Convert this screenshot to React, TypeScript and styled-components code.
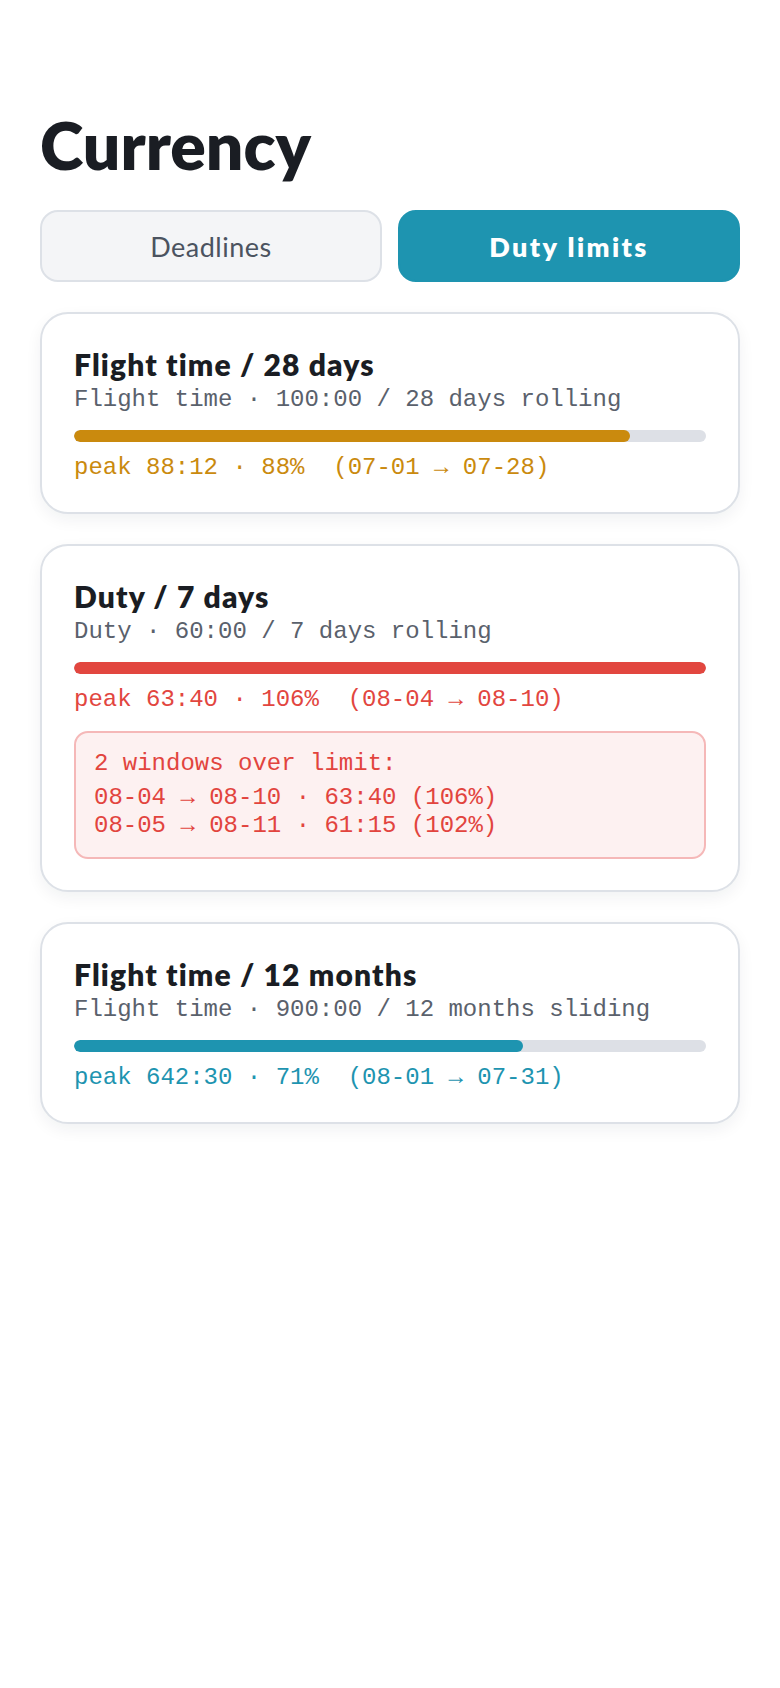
import React, { useState } from "react";
import styled, { createGlobalStyle } from "styled-components";

const GlobalStyle = createGlobalStyle`
  html, body {
    margin: 0;
    padding: 0;
    background: #ffffff;
  }
  * { box-sizing: border-box; }
`;

const Page = styled.main`
  padding: 105px 40px 40px;
  font-family: Lato, "Noto Sans", sans-serif;
  color: #1a1d23;
`;

const Title = styled.h1`
  margin: 0 0 26px;
  font-size: 66px;
  font-weight: 800;
  line-height: 1.2;
  letter-spacing: 0;
`;

const Tabs = styled.div`
  display: grid;
  grid-template-columns: 1fr 1fr;
  gap: 16px;
  margin-bottom: 30px;
`;

const Tab = styled.button<{ $active?: boolean }>`
  height: 72px;
  border-radius: 18px;
  border: 2px solid ${(p) => (p.$active ? "#1e94b0" : "#dde1e7")};
  background: ${(p) => (p.$active ? "#1e94b0" : "#f4f5f7")};
  color: ${(p) => (p.$active ? "#ffffff" : "#4b5360")};
  font-family: Lato, "Noto Sans", sans-serif;
  font-size: 27px;
  font-weight: ${(p) => (p.$active ? 800 : 400)};
  letter-spacing: ${(p) => (p.$active ? "2.4px" : "0.5px")};
  cursor: pointer;
`;

const List = styled.div`
  display: flex;
  flex-direction: column;
  gap: 30px;
`;

const Card = styled.section`
  border: 2px solid #dde1e7;
  border-radius: 28px;
  padding: 32px 32px 31px;
  background: #ffffff;
  box-shadow: 0 6px 16px rgba(20, 30, 50, 0.06);
`;

const CardTitle = styled.h2`
  margin: 0 0 4px;
  font-size: 30px;
  font-weight: 800;
  line-height: 1.2;
  letter-spacing: 1.15px;
  color: #1a1d23;
`;

const Mono = styled.div<{ $color?: string }>`
  font-family: "Liberation Mono", "DejaVu Sans Mono", monospace;
  font-size: 24px;
  white-space: pre;
  color: ${(p) => p.$color ?? "#5a616c"};
`;

const Track = styled.div`
  margin: 17px 0 12px;
  height: 12px;
  border-radius: 6px;
  background: #dde0e6;
  overflow: hidden;
`;

const Fill = styled.div<{ $color: string }>`
  height: 100%;
  border-radius: 6px;
  background: ${(p) => p.$color};
`;

const Alert = styled.div`
  margin-top: 18px;
  border: 2px solid #f5b8b8;
  border-radius: 14px;
  background: #fdf1f1;
  padding: 17px 18px;
  font-family: "Liberation Mono", "DejaVu Sans Mono", monospace;
  font-size: 24px;
  line-height: 28px;
  color: #e2443e;
  white-space: pre;
`;

const AlertHead = styled.div`
  margin-bottom: 6px;
`;

type Limit = {
  title: string;
  rule: string;
  pct: number;
  peak: string;
  color: string;
  over?: string[];
};

const limits: Limit[] = [
  {
    title: "Flight time / 28 days",
    rule: "Flight time · 100:00 / 28 days rolling",
    pct: 88,
    peak: "peak 88:12 · 88%  (07-01 → 07-28)",
    color: "#ca8a0e",
  },
  {
    title: "Duty / 7 days",
    rule: "Duty · 60:00 / 7 days rolling",
    pct: 106,
    peak: "peak 63:40 · 106%  (08-04 → 08-10)",
    color: "#e2463f",
    over: [
      "08-04 → 08-10 · 63:40 (106%)",
      "08-05 → 08-11 · 61:15 (102%)",
    ],
  },
  {
    title: "Flight time / 12 months",
    rule: "Flight time · 900:00 / 12 months sliding",
    pct: 71,
    peak: "peak 642:30 · 71%  (08-01 → 07-31)",
    color: "#1e94b0",
  },
];

export default function App() {
  const [tab, setTab] = useState<"deadlines" | "duty">("duty");
  return (
    <>
      <GlobalStyle />
      <Page>
        <Title>Currency</Title>
        <Tabs>
          <Tab $active={tab === "deadlines"} onClick={() => setTab("deadlines")}>
            Deadlines
          </Tab>
          <Tab $active={tab === "duty"} onClick={() => setTab("duty")}>
            Duty limits
          </Tab>
        </Tabs>
        <List>
          {limits.map((l) => (
            <Card key={l.title}>
              <CardTitle>{l.title}</CardTitle>
              <Mono>{l.rule}</Mono>
              <Track>
                <Fill $color={l.color} style={{ width: `${Math.min(l.pct, 100)}%` }} />
              </Track>
              <Mono $color={l.color}>{l.peak}</Mono>
              {l.over && (
                <Alert>
                  <AlertHead>{l.over.length} windows over limit:</AlertHead>
                  {l.over.map((o) => (
                    <div key={o}>{o}</div>
                  ))}
                </Alert>
              )}
            </Card>
          ))}
        </List>
      </Page>
    </>
  );
}
